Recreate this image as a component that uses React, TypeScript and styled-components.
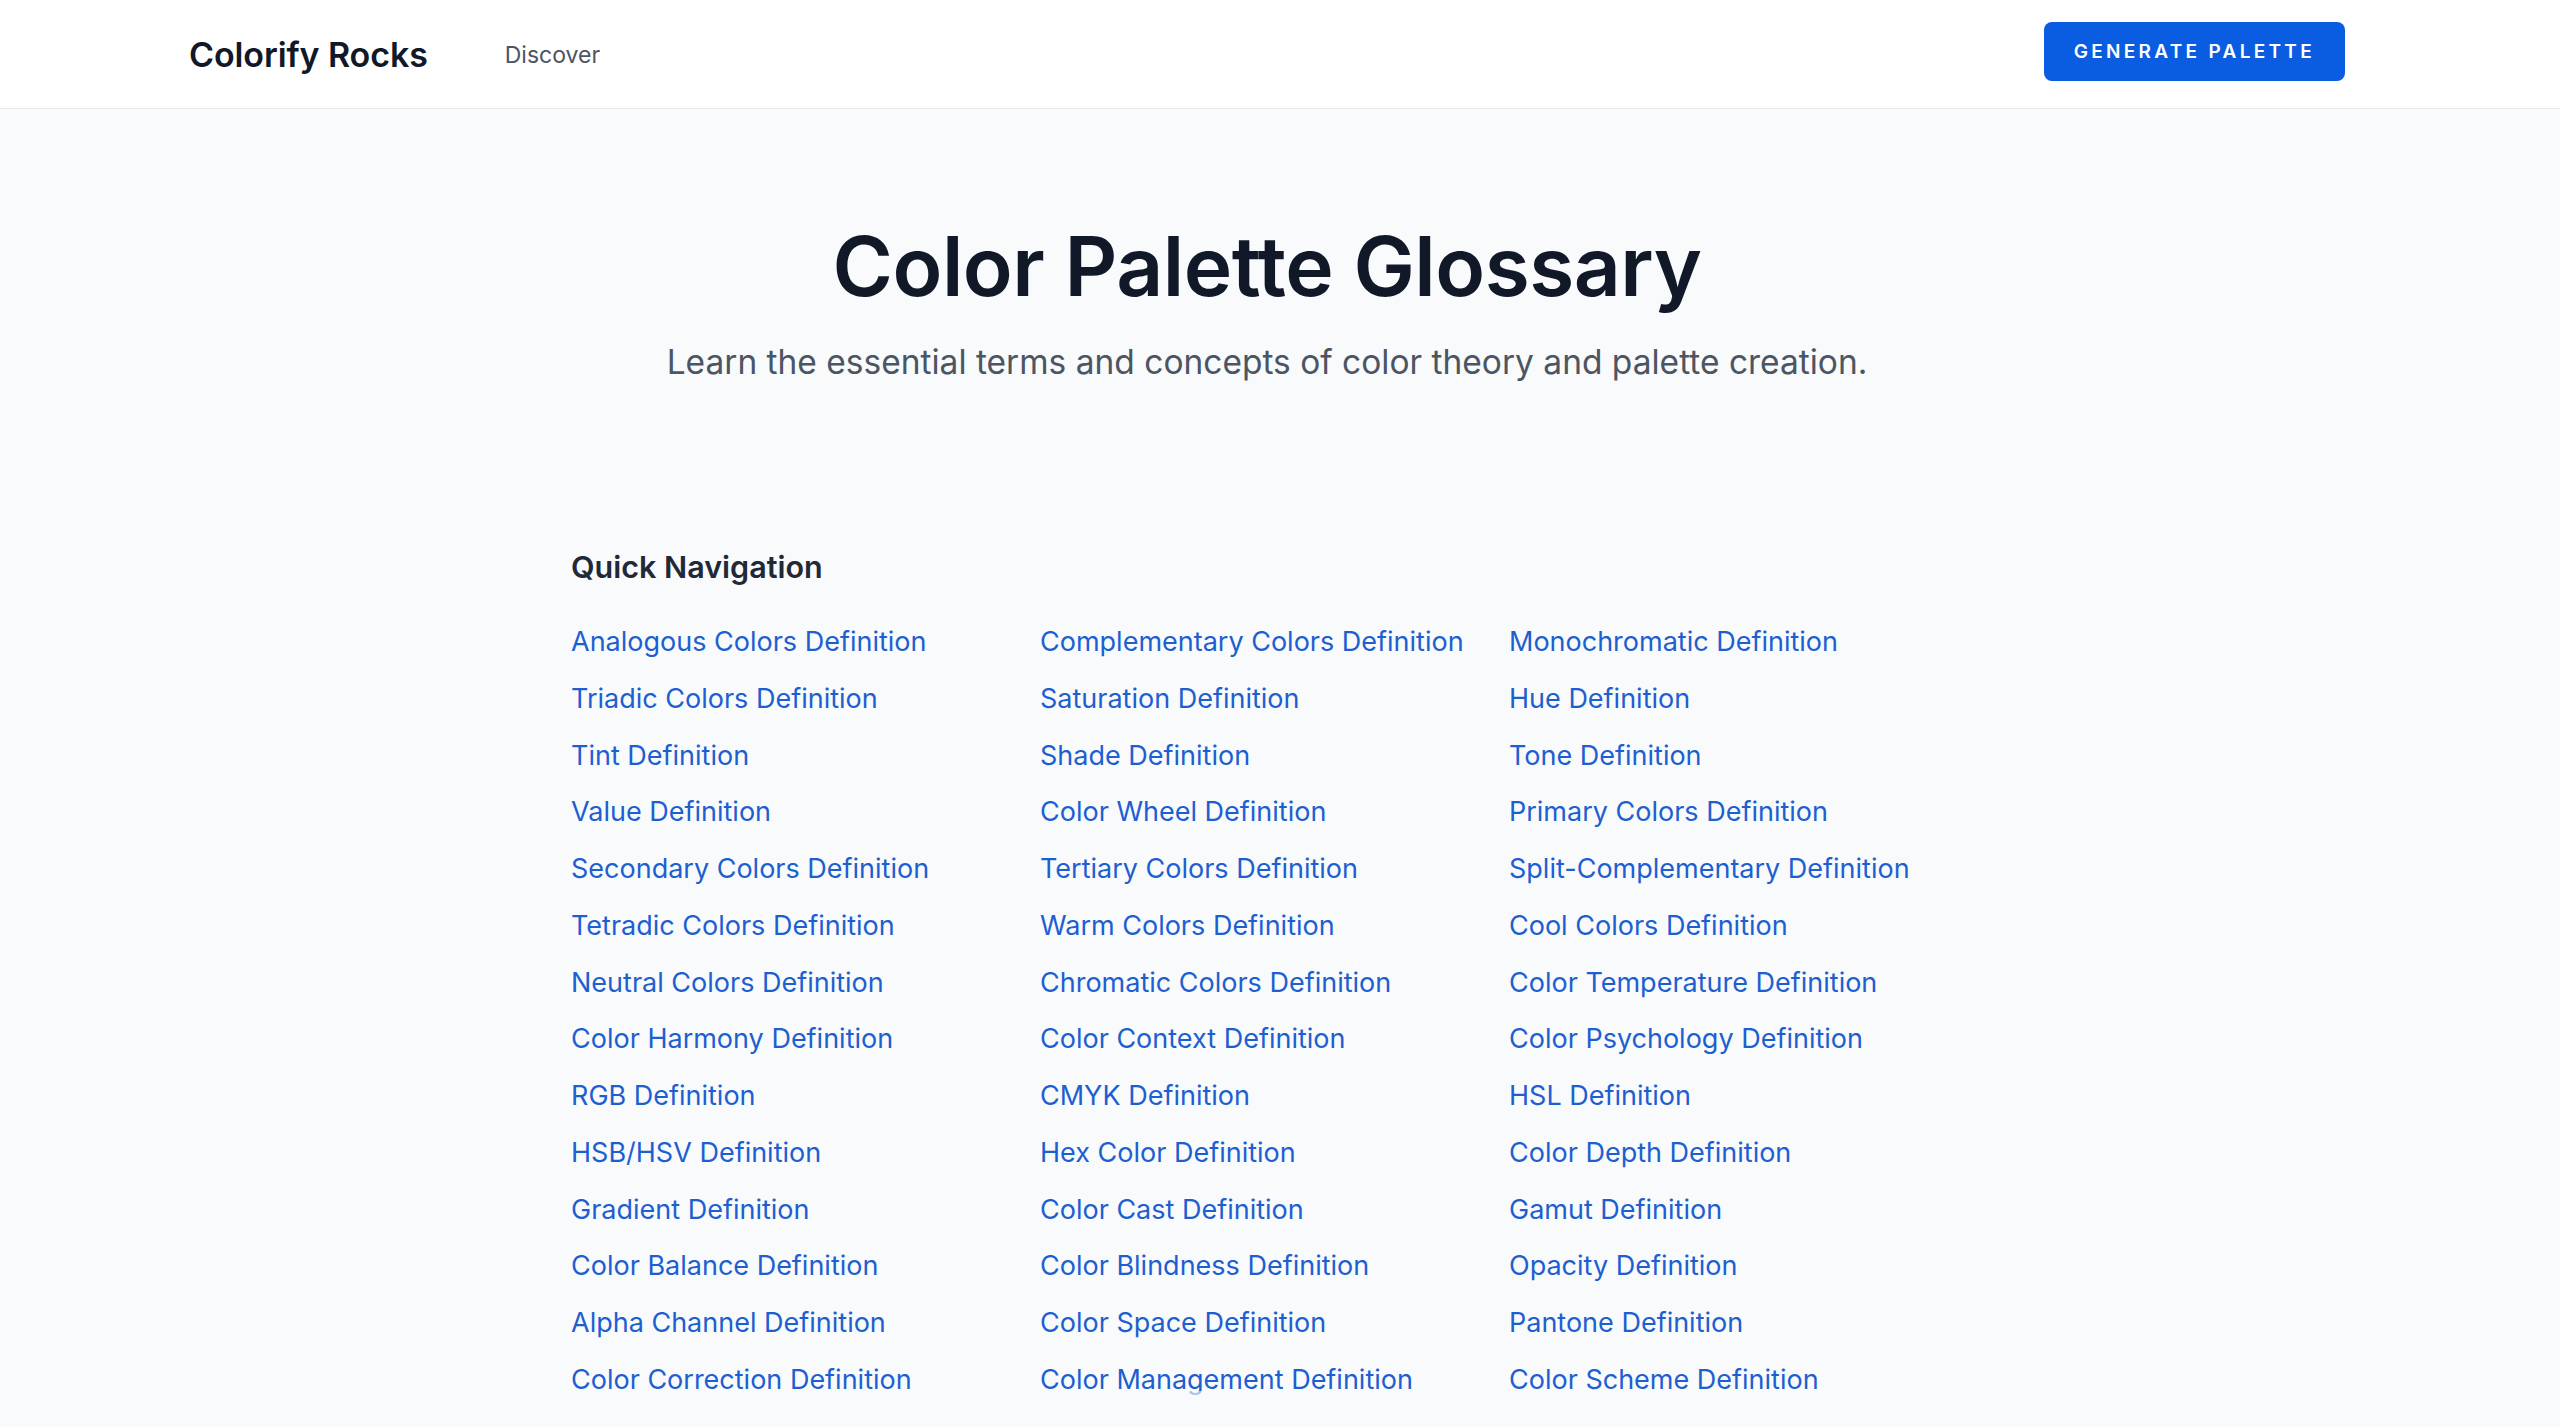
import React from "react";
import styled, { createGlobalStyle } from "styled-components";

const GlobalStyle = createGlobalStyle`
  * {
    box-sizing: border-box;
  }
  html, body {
    margin: 0;
    padding: 0;
    background: #f8fafc;
    font-family: Inter, "Noto Sans", "Liberation Sans", sans-serif;
    color: #111827;
  }
  a {
    text-decoration: none;
  }
`;

const terms = [
  "Analogous Colors", "Complementary Colors", "Monochromatic",
  "Triadic Colors", "Saturation", "Hue",
  "Tint", "Shade", "Tone",
  "Value", "Color Wheel", "Primary Colors",
  "Secondary Colors", "Tertiary Colors", "Split-Complementary",
  "Tetradic Colors", "Warm Colors", "Cool Colors",
  "Neutral Colors", "Chromatic Colors", "Color Temperature",
  "Color Harmony", "Color Context", "Color Psychology",
  "RGB", "CMYK", "HSL",
  "HSB/HSV", "Hex Color", "Color Depth",
  "Gradient", "Color Cast", "Gamut",
  "Color Balance", "Color Blindness", "Opacity",
  "Alpha Channel", "Color Space", "Pantone",
  "Color Correction", "Color Management", "Color Scheme",
  "Color Theory", "Color Mixing", "Color Palette",
];

export default function App() {
  return (
    <>
      <GlobalStyle />
      <Header>
        <HeaderInner>
          <Brand>
            <Logo href="#">Colorify Rocks</Logo>
            <NavLink href="#">Discover</NavLink>
          </Brand>
          <PrimaryButton>Generate Palette</PrimaryButton>
        </HeaderInner>
      </Header>

      <Main>
        <Hero>
          <Title>Color Palette Glossary</Title>
          <Subtitle>
            Learn the essential terms and concepts of color theory and palette creation.
          </Subtitle>
        </Hero>

        <QuickNav>
          <SectionTitle>Quick Navigation</SectionTitle>
          <TermGrid>
            {terms.map((t) => (
              <TermLink key={t} href={"#" + t.toLowerCase().replace(/[^a-z]+/g, "-")}>
                {t} Definition
              </TermLink>
            ))}
          </TermGrid>
        </QuickNav>
      </Main>

      <BottomFade />
    </>
  );
}

const Header = styled.header`
  background: #ffffff;
  border-bottom: 1px solid #e8eaee;
  padding-right: 26px;
`;

const HeaderInner = styled.div`
  max-width: 2156px;
  height: 108px;
  margin: 0 auto;
  display: flex;
  align-items: center;
  justify-content: space-between;
`;

const Brand = styled.div`
  display: flex;
  align-items: center;
  gap: 77px;
`;

const Logo = styled.a`
  font-size: 34px;
  font-weight: 600;
  color: #111827;
  letter-spacing: -0.1px;
`;

const NavLink = styled.a`
  font-size: 23px;
  color: #4b5563;
  margin-top: 2px;
`;

const PrimaryButton = styled.button`
  height: 59px;
  padding: 0 30px;
  margin-bottom: 6px;
  border: none;
  border-radius: 8px;
  background: #0a5ce0;
  color: #ffffff;
  font-family: inherit;
  font-size: 19px;
  font-weight: 600;
  letter-spacing: 3.3px;
  text-transform: uppercase;
  cursor: pointer;
`;

const Main = styled.main`
  padding-right: 26px;
`;

const Hero = styled.section`
  padding-top: 109px;
  display: flex;
  flex-direction: column;
  align-items: center;
  text-align: center;
`;

const Title = styled.h1`
  margin: 0;
  font-size: 82px;
  line-height: 98px;
  font-weight: 600;
  letter-spacing: -0.5px;
  color: #111827;
`;

const Subtitle = styled.p`
  margin: 22px 0 0;
  font-size: 33.5px;
  line-height: 48px;
  color: #4b5563;
`;

const QuickNav = styled.section`
  width: 1392px;
  margin: 161px auto 0;
`;

const SectionTitle = styled.h2`
  margin: 0;
  font-size: 30.5px;
  line-height: 40px;
  font-weight: 600;
  color: #1f2937;
`;

const TermGrid = styled.div`
  margin-top: 35px;
  display: grid;
  grid-template-columns: repeat(3, 454px);
  column-gap: 15px;
  row-gap: 17.75px;
`;

const TermLink = styled.a`
  font-size: 27px;
  line-height: 39px;
  color: #1d5fd1;
  white-space: nowrap;
`;

const BottomFade = styled.div`
  position: fixed;
  left: 0;
  right: 0;
  bottom: 0;
  height: 36px;
  background: linear-gradient(rgba(248, 250, 252, 0.6), #f8fafc 60%);
  pointer-events: none;
`;
